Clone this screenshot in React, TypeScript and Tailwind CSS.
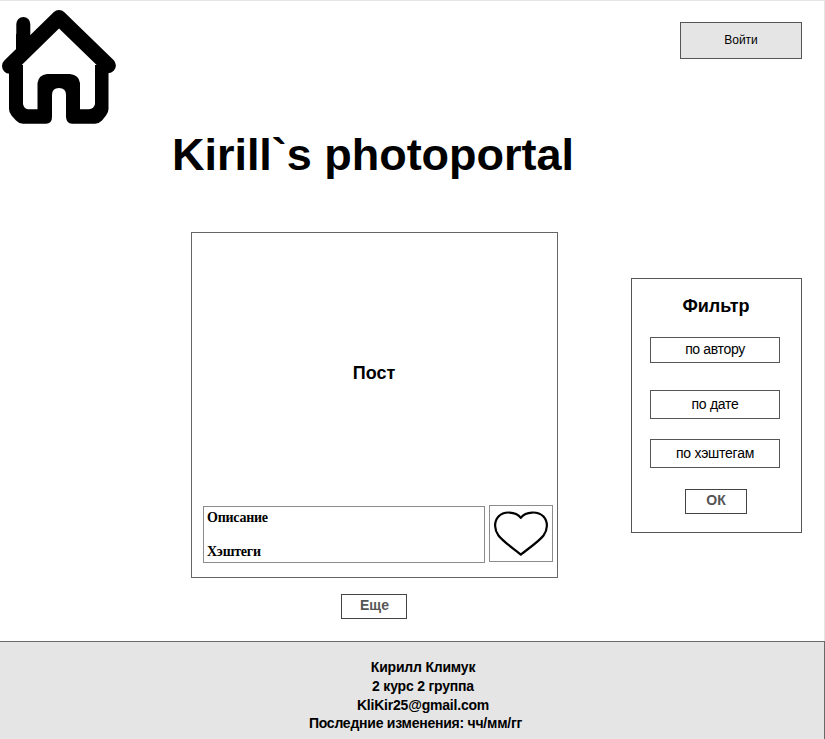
import React from "react";

function HomeIcon() {
  return (
    <svg className="block h-[130px] w-[130px]" viewBox="0 0 130 130">
      <path d="M9.700 66 L59 17.800 L108.200 65.500" fill="none" stroke="#000" strokeWidth="15.400" strokeLinecap="round" strokeLinejoin="round" />
      <path d="M23.300 24 V46" fill="none" stroke="#000" strokeWidth="14" strokeLinecap="round" />
      <path d="M16 34 H30 V40 L16 56 Z" />
      <path d="M9 65 V109 Q9 112.500 11.500 115.500 L16 120.500 Q19 123.700 23 123.700 H46 Q52 123.500 52 117 V95 Q52 88 59 88 Q66 88 66 95 V117 Q66.500 123.500 72 123.700 H95 Q99 123.700 102 120.500 L106 115.500 Q108.500 112.500 108.500 109 V65 H95 V104 Q94 109 89 109.300 H80 V83 Q79 75 70 74 H47 Q38.500 75 37.500 83 V109.300 H28 Q24 109 23 104 V65 Z" />
    </svg>
  );
}

function HeartIcon() {
  return (
    <svg className="block h-[55px] w-[62px]" viewBox="490 506 62 55" fill="none" stroke="#000" strokeWidth="2.2" strokeLinejoin="round">
      <path d="M520.800 517.800 C515.500 511 503.500 511 498.500 516.500 C493.500 522 494.500 530 498.500 535.500 C503.500 542 514 549 520.800 554.600 C527.600 549 538.500 542 543.500 535.500 C547.500 530 548.500 522 543.500 516.500 C538 511 526 511 520.800 517.800 Z" />
    </svg>
  );
}

export default function App() {
  return (
    <div className="flex h-[739px] w-[825px] flex-col overflow-hidden bg-white font-['Liberation_Sans',Arial,sans-serif] text-black">
      <div className="flex h-[641px] shrink-0 flex-col border-t border-r border-[#e4e4e4]">
        <header className="flex h-[129px] shrink-0 items-start justify-between pr-[22px]">
          <div className="-mt-px">
            <HomeIcon />
          </div>
          <button className="mt-[21px] h-[37px] w-[122px] border border-[#555] bg-[#e5e5e5] pb-[2px] text-[12px]">Войти</button>
        </header>
        <h1 className="ml-[172px] h-[50px] w-[440px] shrink-0 text-[45px] leading-[50px] font-bold tracking-[-0.03px] whitespace-nowrap">Kirill`s photoportal</h1>
        <main className="flex items-start">
          <section className="mt-[52px] ml-[191px] flex w-[367px] shrink-0 flex-col items-center">
            <article className="flex h-[346px] w-[367px] flex-col border border-[#666]">
              <h2 className="flex h-[272px] items-end justify-center pr-px pb-[120px] text-[18px] leading-[24px] font-bold">Пост</h2>
              <div className="flex items-start gap-[4px] pl-[11px]">
                <div className="mt-px flex h-[57px] w-[282px] flex-col justify-between border border-[#8c8c8c] pt-[3px] pb-[2px] pl-[3px] font-['Liberation_Serif','Times_New_Roman',serif] text-[14px] leading-[16px] font-bold tracking-[-0.25px]">
                  <p>Описание</p>
                  <p>Хэштеги</p>
                </div>
                <button className="h-[57px] w-[64px] border border-[#8c8c8c]">
                  <HeartIcon />
                </button>
              </div>
            </article>
            <button className="mt-4 mr-[2px] h-[25px] w-[66px] border border-[#444] pb-[3px] pl-[2px] text-[14px] leading-[20px] font-bold text-[#555]">Еще</button>
          </section>
          <aside className="mt-[98px] ml-[73px] flex h-[255px] w-[171px] shrink-0 flex-col items-center border border-[#555] pr-[3px]">
            <h2 className="mt-[15px] ml-[2px] h-[43px] text-[18px] leading-[24px] font-bold">Фильтр</h2>
            <button className="h-[26px] w-[130px] border border-[#555] pb-[2px] text-[14px] leading-[20px] tracking-[-0.35px]">по автору</button>
            <button className="mt-[27px] h-[29px] w-[130px] border border-[#555] text-[14px] tracking-[-0.25px]">по дате</button>
            <button className="mt-[20px] h-[29px] w-[130px] border border-[#555] pb-px text-[14px] tracking-[-0.25px]">по хэштегам</button>
            <button className="mt-[21px] ml-[2px] h-[25px] w-[62px] border border-[#444] pb-[3px] text-[14px] leading-[20px] font-bold text-[#555]">ОК</button>
          </aside>
        </main>
      </div>
      <footer className="h-[98px] shrink-0 border-t border-r border-[#6a6a6a] bg-[#e5e5e5] pt-[16px] text-center text-[14px] font-bold">
        <div className="ml-[5px] w-[836px]">
          <p className="h-[19px] leading-[19px] tracking-[-0.2px]">Кирилл Климук</p>
          <p className="h-[19px] leading-[19px] tracking-[-0.2px]">2 курс 2 группа</p>
          <p className="h-[18px] leading-[18px] tracking-[-0.2px]">KliKir25@gmail.com</p>
          <p className="-ml-[15px] h-[19px] leading-[19px] tracking-[-0.24px]">Последние изменения: чч/мм/гг</p>
        </div>
      </footer>
    </div>
  );
}
